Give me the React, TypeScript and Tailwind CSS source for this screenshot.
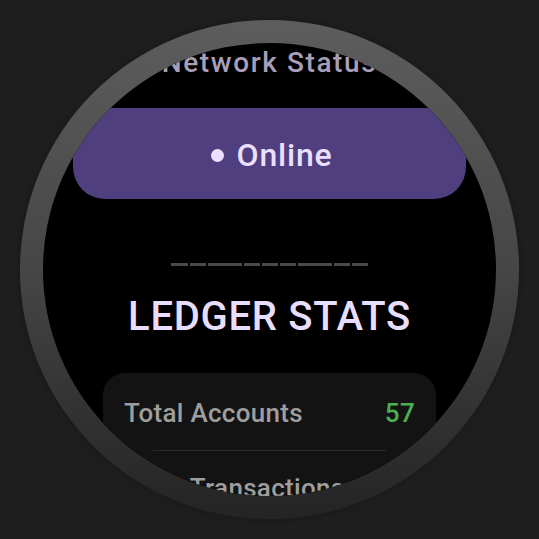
import React from "react";

const segs = [17, 16, 34, 16, 16, 16, 34, 16, 16];

export default function App() {
  return (
    <div
      className="w-[539px] h-[539px] bg-[#1f1f1f] flex items-center justify-center"
      style={{ fontFamily: "Roboto, 'Noto Sans', sans-serif" }}
    >
      <div className="w-[499px] h-[499px] rounded-full bg-gradient-to-b from-[#5d5d5d] via-[#464646] to-[#242424] p-[23px] shadow-[0_0_12px_rgba(0,0,0,0.25)]">
        <div className="w-full h-full rounded-full bg-black overflow-hidden flex flex-col items-center">
          <div className="mt-[6px] text-[28px] leading-[28px] font-medium tracking-[1.6px] text-[#a69fb7] whitespace-nowrap">
            Network Status
          </div>
          <div className="mt-[31px] w-[393px] h-[91px] shrink-0 rounded-[32px] bg-[#4f3f7f] flex items-center justify-center pt-[3px] pl-[4px]">
            <div className="w-[13px] h-[13px] rounded-full bg-[#eadfff] mr-[13px] mt-[1px]" />
            <span className="text-[32px] leading-[32px] font-medium tracking-[0.8px] text-[#eadfff]">Online</span>
          </div>
          <div className="mt-[64px] flex gap-[2px] shrink-0">
            {segs.map((w, i) => (
              <div key={i} className="h-[3px] bg-[#4a4a4a]" style={{ width: w }} />
            ))}
          </div>
          <div className="mt-[31px] text-[40px] leading-[40px] font-medium tracking-[0.7px] text-[#e6defc] whitespace-nowrap">
            LEDGER STATS
          </div>
          <div className="mt-[36px] w-[333px] shrink-0 rounded-[22px] bg-[#131313] pt-[24px] px-[21px] pb-[24px]">
            <div className="flex items-center justify-between h-[32px] text-[26px] leading-[32px] font-medium tracking-[0.3px]">
              <span className="text-[#9e9e9e]">Total Accounts</span>
              <span className="text-[#4caf50]">57</span>
            </div>
            <div className="mt-[21px] mx-[29px] h-px bg-[#2b2b2b]" />
            <div className="mt-[21px] flex items-center justify-between h-[32px] text-[26px] leading-[32px] font-medium tracking-[0.3px]">
              <span className="text-[#9e9e9e]">Total Transactions</span>
              <span className="text-[#4caf50]">312</span>
            </div>
          </div>
        </div>
      </div>
    </div>
  );
}
